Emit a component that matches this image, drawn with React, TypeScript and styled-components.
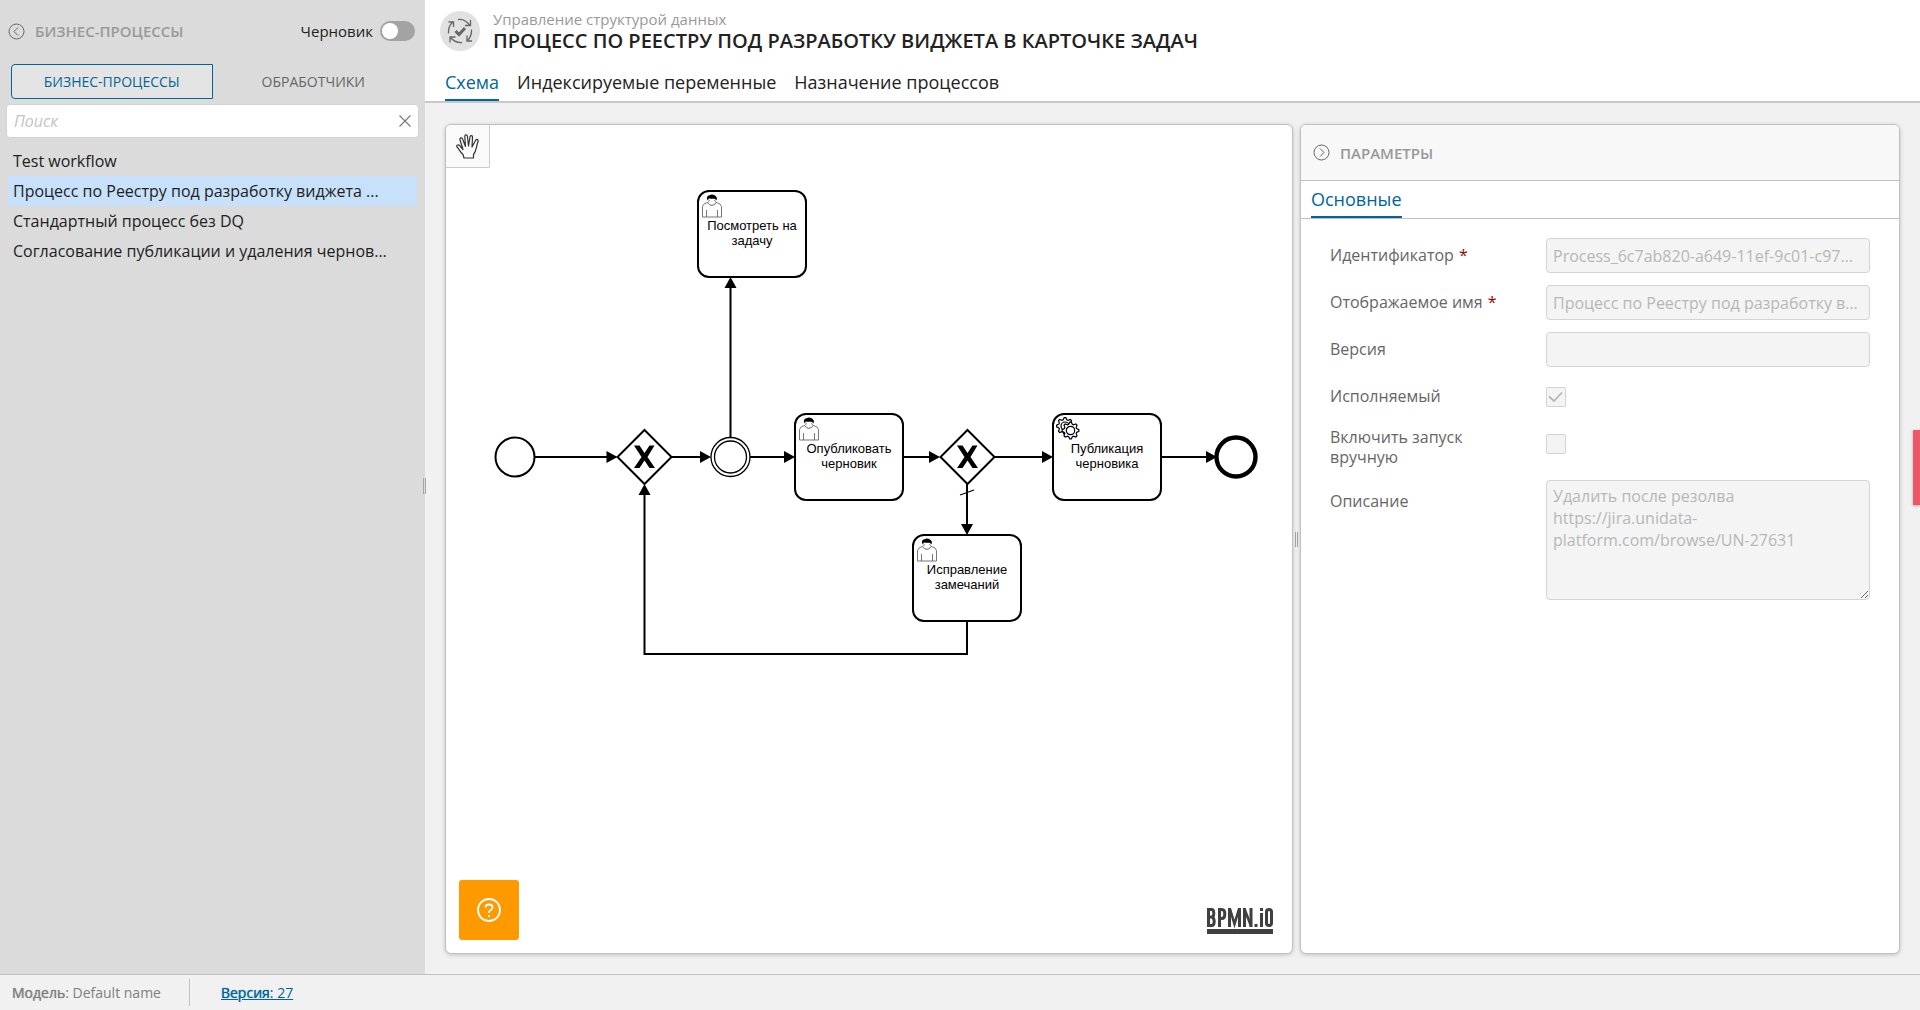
import React from "react";
import styled, { createGlobalStyle, css } from "styled-components";

const color = {
  accent: "#006699",
  line: "#c0c0c0",
  fieldLine: "#d3d3d3",
  fieldText: "#b7b7b7",
  muted: "#999999",
  label: "#666666",
  text: "#222222",
};

const GlobalStyle = createGlobalStyle`
  *, *::before, *::after { box-sizing: border-box; }
  html, body, #root { height: 100%; }
  body {
    margin: 0;
    background: #f1f1f1;
    color: ${color.text};
    font-family: "Open Sans", "Noto Sans", sans-serif;
    font-size: 16px;
  }
  button, input, textarea { font: inherit; }
  button { padding: 0; border: 0; background: none; color: inherit; cursor: pointer; }
`;

const Page = styled.div`
  position: relative;
  display: flex;
  flex-direction: column;
  height: 100vh;
  min-height: 720px;
  overflow: hidden;
`;

const Workspace = styled.div`
  display: flex;
  flex: 1;
  min-height: 0;
`;

/* Sidebar */

const Sidebar = styled.aside`
  display: flex;
  flex-direction: column;
  flex: 0 0 425px;
  min-width: 0;
  padding: 16px 6px 0;
  background: #dbdbdb;
`;

const SidebarHead = styled.div`
  display: flex;
  align-items: center;
  height: 30px;
  padding: 0 4px 0 2px;
`;

const RoundButton = styled.button`
  display: flex;
  color: #666;
`;

const PanelTitle = styled.h2`
  margin: 0 0 0 10px;
  color: ${color.muted};
  font-size: 15px;
  font-weight: 600;
  line-height: 20px;
  text-transform: uppercase;
`;

const DraftToggle = styled.label`
  display: flex;
  align-items: center;
  gap: 7px;
  margin-left: auto;
  font-size: 15px;
`;

const Switch = styled.input`
  appearance: none;
  display: flex;
  width: 35px;
  height: 20px;
  margin: 0;
  padding: 2px;
  border-radius: 10px;
  background: #a3a3a3;
  &::before {
    content: "";
    width: 16px;
    height: 16px;
    border-radius: 50%;
    background: #fff;
  }
  &:checked { justify-content: flex-end; background: ${color.accent}; }
`;

const Segments = styled.div`
  display: flex;
  margin-top: 18px;
  padding: 0 5px;
`;

const Segment = styled.button<{ $active?: boolean }>`
  flex: 1;
  height: 35px;
  border: 1px solid transparent;
  border-radius: 4px 0 0 4px;
  color: ${color.label};
  font-size: 14px;
  text-transform: uppercase;
  ${(p) => p.$active && css`
    border-color: ${color.accent};
    background: #e4e4e4;
    color: ${color.accent};
  `}
`;

const SearchBox = styled.div`
  display: flex;
  align-items: center;
  height: 34px;
  margin-top: 5px;
  padding: 0 7px;
  border: 1px solid #d3d3d3;
  border-radius: 4px;
  background: #fff;
`;

const SearchInput = styled.input`
  flex: 1;
  min-width: 0;
  padding: 0;
  border: 0;
  outline: 0;
  background: none;
  &::placeholder { color: #c4c4c4; font-style: italic; opacity: 1; }
`;

const ProcessList = styled.ul`
  margin: 8px 0 0;
  padding: 0 2px;
  list-style: none;
`;

const ProcessItem = styled.button<{ $active?: boolean }>`
  display: block;
  width: 100%;
  height: 30px;
  padding: 0 5px;
  background: ${(p) => (p.$active ? "#c7e1fb" : "transparent")};
  line-height: 30px;
  text-align: left;
  white-space: nowrap;
`;

/* Main area */

const Main = styled.main`
  display: flex;
  flex: 1;
  flex-direction: column;
  min-width: 0;
`;

const Header = styled.header`
  display: flex;
  flex-direction: column;
  background: #fff;
  border-bottom: 2px solid #c8c8c8;
`;

const Heading = styled.div`
  display: flex;
  gap: 13px;
  padding: 11px 15px 0;
`;

const Crumb = styled.div`
  padding-bottom: 2px;
  color: ${color.muted};
  font-size: 15px;
  line-height: 16px;
`;

const Title = styled.h1`
  margin: 0;
  font-size: 20px;
  font-weight: 600;
  line-height: 24px;
  text-transform: uppercase;
`;

const TabBar = styled.nav<{ $inset?: boolean }>`
  display: flex;
  gap: 18px;
  height: ${(p) => (p.$inset ? 38 : 36)}px;
  margin-top: ${(p) => (p.$inset ? 0 : 12)}px;
  padding: 0 ${(p) => (p.$inset ? 10 : 20)}px;
  border-bottom: ${(p) => (p.$inset ? `1px solid ${color.line}` : 0)};
`;

const Tab = styled.button<{ $active?: boolean }>`
  border-bottom: 2px solid ${(p) => (p.$active ? color.accent : "transparent")};
  color: ${(p) => (p.$active ? color.accent : color.text)};
  font-size: 18px;
  line-height: 24px;
`;

const Content = styled.div`
  display: flex;
  flex: 1;
  min-height: 0;
  padding: 21px 20px 20px 0;
`;

const Card = styled.section`
  position: relative;
  display: flex;
  flex-direction: column;
  min-width: 0;
  overflow: hidden;
  border: 1px solid ${color.line};
  border-radius: 6px;
  background: #fff;
  box-shadow: 0 1px 4px rgba(0, 0, 0, 0.2);
`;

const DiagramCard = styled(Card)`
  flex: 1;
  margin-left: 20px;
`;

const ParamsCard = styled(Card)`
  flex: 0 0 600px;
`;

const Splitter = styled.div`
  display: flex;
  align-items: center;
  justify-content: center;
  width: 7px;
  &::before {
    content: "";
    width: 3px;
    height: 15px;
    border: solid #a6a6a6;
    border-width: 0 1px;
  }
`;

const SidebarGrip = styled.span`
  position: absolute;
  top: 478px;
  left: 423px;
  width: 3px;
  height: 16px;
  border: solid #a6a6a6;
  border-width: 0 1px;
`;

const ToolButton = styled.button`
  position: absolute;
  top: 0;
  left: 0;
  display: flex;
  align-items: center;
  justify-content: center;
  width: 44px;
  height: 43px;
  border: solid #ccc;
  border-width: 0 1px 1px 0;
  border-radius: 0 0 2px 0;
  background: #fafafa;
`;

const HelpButton = styled.button`
  position: absolute;
  bottom: 13px;
  left: 13px;
  display: flex;
  align-items: center;
  justify-content: center;
  width: 60px;
  height: 60px;
  border-radius: 3px;
  background: #ff9900;
`;

const BrandLink = styled.a`
  position: absolute;
  right: 19px;
  bottom: 19px;
  display: flex;
`;

const Diagram = styled.svg`
  display: block;
  flex: none;
`;

/* Parameters */

const ParamsHead = styled.div`
  display: flex;
  align-items: center;
  height: 56px;
  padding: 0 12px;
  border-bottom: 1px solid ${color.line};
  background: #f8f8f8;
`;

const Form = styled.form`
  display: flex;
  flex-direction: column;
  gap: 12px;
  padding: 19px 29px;
`;

const Field = styled.div`
  display: grid;
  grid-template-columns: 216px 1fr;
  align-items: start;
`;

const FieldLabel = styled.label<{ $tall?: boolean }>`
  display: flex;
  align-items: center;
  gap: 5px;
  min-height: ${(p) => (p.$tall ? 42 : 34)}px;
  padding-right: 24px;
  color: ${color.label};
  line-height: 20px;
`;

const Required = styled.span`
  color: #990000;
`;

const fieldBox = css`
  width: 100%;
  border: 1px solid ${color.fieldLine};
  border-radius: 4px;
  background: #f4f4f4;
  color: ${color.fieldText};
`;

const TextInput = styled.input`
  ${fieldBox}
  height: 35px;
  padding: 0 9px 0 6px;
  text-overflow: ellipsis;
`;

const TextArea = styled.textarea`
  ${fieldBox}
  display: block;
  height: 120px;
  padding: 4px 6px;
  line-height: 22px;
`;

const CheckCell = styled.div`
  display: grid;
  width: 20px;
  height: 27px;
  margin-top: 8px;
  align-items: start;
  > * { grid-area: 1 / 1; }
`;

const Checkbox = styled.input`
  appearance: none;
  width: 20px;
  height: 20px;
  margin: 0;
  border: 1px solid ${color.fieldLine};
  border-radius: 2px;
  background: #f4f4f4;
`;

const EdgeTab = styled.button`
  position: absolute;
  top: 430px;
  right: 0;
  width: 7px;
  height: 75px;
  background: #ee5566;
  box-shadow: 0 1px 3px rgba(0, 0, 0, 0.3);
`;

/* Footer */

const Footer = styled.footer`
  display: flex;
  align-items: center;
  height: 36px;
  padding: 0 12px;
  border-top: 1px solid ${color.line};
  color: #808080;
  font-size: 14px;
`;

const Strong = styled.span`
  text-shadow: 0 0 1px currentColor;
`;

const Divider = styled.span`
  width: 1px;
  height: 27px;
  margin: 0 31px 0 28px;
  background: ${color.line};
`;

const VersionLink = styled.a`
  color: ${color.accent};
`;

/* Drawings */

const CircleChevron = ({ right }: { right?: boolean }) => (
  <svg width="17" height="17" viewBox="0 0 17 17" fill="none" stroke="currentColor" aria-hidden="true">
    <circle cx="8.5" cy="8.5" r="7.5" />
    <path d={right ? "M7 4.5l4 4-4 4" : "M10 4.5l-4 4 4 4"} />
  </svg>
);

const CycleIcon = () => (
  <svg width="40" height="40" viewBox="0 0 40 40" fill="none" stroke="#666" strokeWidth="1.3" aria-hidden="true">
    <circle cx="20" cy="20" r="20" fill="#e1e1e1" stroke="none" />
    <path d="M8.500 22.500Q8 15 13 11M8.500 11h5v5" />
    <path d="M18 8.500Q25 8 29.500 14M30.500 9v5.500H25" />
    <path d="M31.500 18.500Q32 25 27.500 29.500M27 24.500v5.500h5" />
    <path d="M22 31.500Q15 32 10.500 26.500M10 31.500v-5.500h5.500" />
    <path d="M15.500 20l3.500 3.500 6-6.500" strokeWidth="3" />
  </svg>
);

const HandIcon = () => (
  <svg width="26" height="26" viewBox="0 0 26 26" fill="none" stroke="#333" strokeWidth="1.2" strokeLinejoin="round" aria-hidden="true">
    <path d="M9 25L8 21.500C5 19 4.500 16.500 2 14C.8 12 3.500 11 5 13L8 16.500L5 7C4.500 4.500 7 4 7.800 6.500L10.500 13.500L9.800 3.500C9.800 1.300 12.200 1.300 12.500 3.500L13.500 13L15 4C15.500 1.700 17.800 2.300 17.500 4.500L17 14L20.500 7.500C21.800 5.500 23.800 6.700 23 8.700C21 13.500 21.800 17.500 18.500 21.500V25Z" />
  </svg>
);

const arrows: Record<string, string> = {
  right: "-11,-6 0,0 -11,6",
  up: "-6,11 0,0 6,11",
  down: "-6,-11 0,0 6,-11",
};

const Arrow = ({ x, y, to }: { x: number; y: number; to: string }) => (
  <polygon points={arrows[to]} transform={`translate(${x} ${y})`} fill="#000" />
);

const UserMark = () => (
  <g>
    <path d="M4.500 26V15.500Q5 12.500 9.500 11.500Q13 17 18.500 11.500Q23 12.500 23.500 15.500V26ZM8.500 19V26M19.500 19V26" fill="#fff" stroke="#555" strokeWidth=".8" />
    <path d="M9.500 11.500L11.500 10Q9.500 8 9.500 6.500H18.500Q18.500 8 16.500 10L18.500 11.500Q13.500 17 9.500 11.500" fill="#fff" stroke="#555" strokeWidth=".7" />
    <path d="M9.200 9.500Q8 4.500 11.500 4.200Q14 2.800 17 4.500Q19.500 6 18.500 9.500Q18 7.500 16 7.800Q13 8 11 7.500Q9.500 8 9.200 9.500Z" fill="#000" />
  </g>
);

const teeth = (cx: number, cy: number) =>
  Array.from({ length: 32 }, (_, i) => {
    const radius = i % 4 < 2 ? 8.4 : 6.4;
    const angle = ((i - 0.5) / 32) * Math.PI * 2;
    return `${cx + Math.cos(angle) * radius},${cy + Math.sin(angle) * radius}`;
  }).join(" ");

const GearMark = () => (
  <g fill="#fff" stroke="#000" strokeWidth="1.2">
    <polygon points={teeth(12, 12)} />
    <circle cx="12" cy="12" r="4" />
    <polygon points={teeth(17.5, 16.5)} />
    <circle cx="17.5" cy="16.5" r="4.2" />
  </g>
);

type TaskProps = { x: number; y: number; lines: string[]; service?: boolean };

const Task = ({ x, y, lines, service }: TaskProps) => (
  <g transform={`translate(${x} ${y})`}>
    <rect width="108" height="86" rx="11" fill="#fff" stroke="#000" strokeWidth="2" />
    {service ? <GearMark /> : <UserMark />}
    <g fontFamily='"Liberation Sans", Arial, sans-serif' fontSize="13" textAnchor="middle">
      {lines.map((line, i) => (
        <text key={line} x="54" y={39 + i * 15}>{line}</text>
      ))}
    </g>
  </g>
);

const Gateway = ({ x, y }: { x: number; y: number }) => (
  <g transform={`translate(${x} ${y})`}>
    <path d="M0-27L27 0 0 27-27 0Z" fill="#fff" stroke="#000" strokeWidth="2" />
    <path d="M-10.500-11.500H-5L0-4 5-11.500H10L3 0 10.500 11H5L0 3.500-5 11H-10.500L-3 0Z" fill="#000" />
  </g>
);

const ProcessDiagram = () => (
  <Diagram width="846" height="700" viewBox="446 125 846 700" role="img" aria-label="Схема процесса">
    <g fill="none" stroke="#000" strokeWidth="2">
      <path d="M535 457H610M670 457H704M750 457H788M903 457H935M994 457H1046M1161 457H1210" />
      <path d="M730.500 438V284M967 483V529M967 622V654H644.500V490" />
      <path d="M960 495l14-5" strokeWidth="1.2" />
      <circle cx="515" cy="457" r="19.500" />
      <circle cx="1236" cy="457" r="19.500" strokeWidth="4.400" />
      <circle cx="730.500" cy="457" r="19.500" strokeWidth="1.300" />
      <circle cx="730.500" cy="457" r="16" strokeWidth="1.300" />
    </g>
    <Gateway x={644.5} y={457} />
    <Gateway x={967.5} y={457} />
    <Task x={698} y={191} lines={["Посмотреть на", "задачу"]} />
    <Task x={795} y={414} lines={["Опубликовать", "черновик"]} />
    <Task x={1053} y={414} lines={["Публикация", "черновика"]} service />
    <Task x={913} y={535} lines={["Исправление", "замечаний"]} />
    <Arrow x={617.5} y={457} to="right" />
    <Arrow x={711} y={457} to="right" />
    <Arrow x={795} y={457} to="right" />
    <Arrow x={940} y={457} to="right" />
    <Arrow x={1053} y={457} to="right" />
    <Arrow x={1217} y={457} to="right" />
    <Arrow x={730.5} y={277} to="up" />
    <Arrow x={644.5} y={484} to="up" />
    <Arrow x={967} y={535} to="down" />
  </Diagram>
);

const BrandMark = () => (
  <svg width="66" height="26" viewBox="0 0 66 26" fill="none" stroke="#404040" strokeWidth="3" aria-label="BPMN.iO">
    <path d="M1.500 0V19M1.500 1.500H4.500Q6.800 1.500 6.800 5.200Q6.800 9 4.500 9H1.500M4.500 9Q7.200 9.500 7.200 13.500Q7.200 17.500 4.500 17.500H1.500" />
    <path d="M12.500 19V0M12.500 1.500H15Q17.800 1.500 17.800 6Q17.800 10.500 15 10.500H12.500" />
    <path d="M22.500 19V0M32.500 19V0M37.500 19V0M44 19V0" />
    <path d="M23 1L27.500 16 32 1M37.500 1L44 18" strokeWidth="2.600" />
    <path d="M47.500 17.500H50.500M54.500 5V19M54.500 0V3" />
    <rect x="59.500" y="1.500" width="5" height="16" rx="2.400" />
    <path d="M0 23.500H66" strokeWidth="5" />
  </svg>
);

const processes = [
  "Test workflow",
  "Процесс по Реестру под разработку виджета ...",
  "Стандартный процесс без DQ",
  "Согласование публикации и удаления чернов...",
];

export default function App() {
  return (
    <Page>
      <GlobalStyle />
      <Workspace>
        <Sidebar>
          <SidebarHead>
            <RoundButton aria-label="Свернуть"><CircleChevron /></RoundButton>
            <PanelTitle>Бизнес-процессы</PanelTitle>
            <DraftToggle>
              Черновик
              <Switch type="checkbox" role="switch" />
            </DraftToggle>
          </SidebarHead>
          <Segments>
            <Segment $active>Бизнес-процессы</Segment>
            <Segment>Обработчики</Segment>
          </Segments>
          <SearchBox>
            <SearchInput type="text" placeholder="Поиск" aria-label="Поиск" />
            <RoundButton aria-label="Очистить">
              <svg width="12" height="12" viewBox="0 0 12 12" stroke="#777" strokeWidth="1.1" aria-hidden="true">
                <path d="M.5.500l11 11M11.500.500l-11 11" />
              </svg>
            </RoundButton>
          </SearchBox>
          <ProcessList>
            {processes.map((name, i) => (
              <li key={name}>
                <ProcessItem $active={i === 1}>{name}</ProcessItem>
              </li>
            ))}
          </ProcessList>
        </Sidebar>
        <Main>
          <Header>
            <Heading>
              <CycleIcon />
              <div>
                <Crumb>Управление структурой данных</Crumb>
                <Title>Процесс по Реестру под разработку виджета в карточке задач</Title>
              </div>
            </Heading>
            <TabBar>
              <Tab $active>Схема</Tab>
              <Tab>Индексируемые переменные</Tab>
              <Tab>Назначение процессов</Tab>
            </TabBar>
          </Header>
          <Content>
            <DiagramCard>
              <ProcessDiagram />
              <ToolButton aria-label="Перемещение"><HandIcon /></ToolButton>
              <HelpButton aria-label="Помощь">
                <svg width="24" height="24" viewBox="0 0 24 24" fill="none" stroke="#fff" strokeWidth="1.8" aria-hidden="true">
                  <circle cx="12" cy="12" r="11" />
                  <path d="M8.500 9.500Q8.500 6.500 12 6.500T15.500 9.500Q15.500 11 13.800 12T12 14.500V15M12 17v2" />
                </svg>
              </HelpButton>
              <BrandLink href="#bpmn"><BrandMark /></BrandLink>
            </DiagramCard>
            <Splitter />
            <ParamsCard>
              <ParamsHead>
                <RoundButton aria-label="Свернуть"><CircleChevron right /></RoundButton>
                <PanelTitle>Параметры</PanelTitle>
              </ParamsHead>
              <TabBar $inset>
                <Tab $active>Основные</Tab>
              </TabBar>
              <Form>
                <Field>
                  <FieldLabel htmlFor="pid">Идентификатор <Required>*</Required></FieldLabel>
                  <TextInput id="pid" disabled defaultValue="Process_6c7ab820-a649-11ef-9c01-c97d5a1e" />
                </Field>
                <Field>
                  <FieldLabel htmlFor="pname">Отображаемое имя <Required>*</Required></FieldLabel>
                  <TextInput id="pname" disabled defaultValue="Процесс по Реестру под разработку виджета в карточке задач" />
                </Field>
                <Field>
                  <FieldLabel htmlFor="pver">Версия</FieldLabel>
                  <TextInput id="pver" disabled />
                </Field>
                <Field>
                  <FieldLabel htmlFor="pexec">Исполняемый</FieldLabel>
                  <CheckCell>
                    <Checkbox id="pexec" type="checkbox" defaultChecked disabled />
                    <svg width="20" height="20" viewBox="0 0 20 20" fill="none" stroke="#b7b7b7" strokeWidth="1.8" aria-hidden="true">
                      <path d="M3 9.500l5 4.500 8-8.500" />
                    </svg>
                  </CheckCell>
                </Field>
                <Field>
                  <FieldLabel htmlFor="pman" $tall>Включить запуск вручную</FieldLabel>
                  <CheckCell>
                    <Checkbox id="pman" type="checkbox" disabled />
                  </CheckCell>
                </Field>
                <Field>
                  <FieldLabel htmlFor="pdesc" $tall>Описание</FieldLabel>
                  <TextArea id="pdesc" disabled defaultValue={"Удалить после резолва https://jira.unidata-platform.com/browse/UN-27631"} />
                </Field>
              </Form>
            </ParamsCard>
          </Content>
        </Main>
      </Workspace>
      <Footer>
        <span><Strong>Модель</Strong>: Default name</span>
        <Divider />
        <VersionLink href="#version"><Strong>Версия</Strong>: 27</VersionLink>
      </Footer>
      <SidebarGrip />
      <EdgeTab aria-label="Открыть панель" />
    </Page>
  );
}
